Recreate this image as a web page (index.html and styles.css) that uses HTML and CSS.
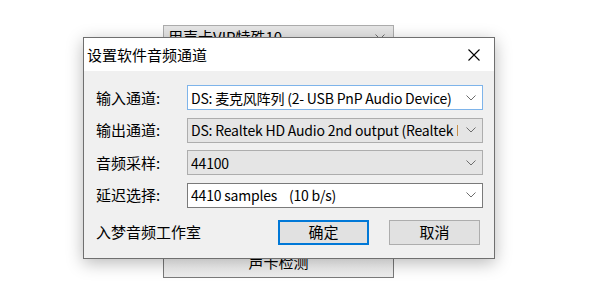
FILE: index.html
```html
<!DOCTYPE html>
<html lang="zh-CN">
  <head>
    <meta charset="UTF-8" />
    <meta name="viewport" content="width=device-width, initial-scale=1.0" />
    <title>设置软件音频通道</title>
    <link rel="stylesheet" href="styles.css">
  </head>
  <body>
    <div class="app">
      <div class="app-title">入梦音频助手</div>
      <div class="app-select">
        <span>用声卡VIP特殊10</span>
        <svg class="arrow" width="10" height="6" viewBox="0 0 10 6"><path d="M0.5 0.5 L5 5 L9.5 0.5" /></svg>
      </div>
      <div class="app-btn">声卡检测</div>
    </div>

    <div class="dialog">
      <div class="titlebar">
        <span>设置软件音频通道</span>
        <svg class="close" width="12" height="12" viewBox="0 0 12 12"><path d="M0.5 0.5 L11.5 11.5 M11.5 0.5 L0.5 11.5" /></svg>
      </div>
      <div class="client">
        <div class="form">
          <label>输入通道:</label>
          <div class="combo combo-focus">
            <span class="combo-text">DS: 麦克风阵列 (2- USB PnP Audio Device)</span>
            <svg class="arrow" width="10" height="6" viewBox="0 0 10 6"><path d="M0.5 0.5 L5 5 L9.5 0.5" /></svg>
          </div>

          <label>输出通道:</label>
          <div class="combo combo-list">
            <span class="combo-text">DS: Realtek HD Audio 2nd output (Realtek High Definition Audio)</span>
            <svg class="arrow" width="10" height="6" viewBox="0 0 10 6"><path d="M0.5 0.5 L5 5 L9.5 0.5" /></svg>
          </div>

          <label>音频采样:</label>
          <div class="combo combo-list">
            <span class="combo-text">44100</span>
            <svg class="arrow" width="10" height="6" viewBox="0 0 10 6"><path d="M0.5 0.5 L5 5 L9.5 0.5" /></svg>
          </div>

          <label>延迟选择:</label>
          <div class="combo combo-edit">
            <span class="combo-text">4410 samples&nbsp;&nbsp;&nbsp;&nbsp;(10 b/s)</span>
            <svg class="arrow" width="10" height="6" viewBox="0 0 10 6"><path d="M0.5 0.5 L5 5 L9.5 0.5" /></svg>
          </div>
        </div>

        <div class="footer">
          <span class="studio">入梦音频工作室</span>
          <div class="buttons">
            <button class="btn btn-default">确定</button>
            <button class="btn">取消</button>
          </div>
        </div>
      </div>
    </div>
  </body>
</html>
```

FILE: styles.css
```css
body {
  font-family: "Noto Sans CJK SC", "Liberation Sans", sans-serif;
  font-size: 15px;
  margin: 0;
  padding: 0;
  width: 600px;
  height: 306px;
  overflow: hidden;
  background-color: white;
  color: #000;
  position: relative;
}
.app {
  width: 231px;
  margin-left: 163px;
}
.app-title {
  height: 20px;
  line-height: 20px;
  margin-top: -18px;
  text-align: center;
}
.app-select {
  box-sizing: border-box;
  height: 24px;
  margin-top: 23px;
  padding: 0 8px 0 4px;
  border: 1px solid #adadad;
  background-color: #e5e5e5;
  display: flex;
  align-items: center;
  justify-content: space-between;
  line-height: 20px;
}
.app-btn {
  box-sizing: border-box;
  height: 32px;
  margin-top: 197px;
  border: 1px solid #7a7a7a;
  background: linear-gradient(#fdfdfd, #ececec);
  display: flex;
  align-items: center;
  justify-content: center;
  padding-bottom: 2px;
}
.arrow path {
  fill: none;
  stroke: #6d6d6d;
  stroke-width: 1;
}

/* dialog on top of the app window */
.dialog {
  position: absolute;
  left: 83px;
  top: 37px;
  width: 412px;
  height: 222px;
  box-sizing: border-box;
  border: 1px solid #6f6f6f;
  background-color: #f0f0f0;
  box-shadow: 0 4px 16px rgba(0, 0, 0, 0.28);
  display: flex;
  flex-direction: column;
}
.titlebar {
  height: 32px;
  background-color: white;
  display: flex;
  align-items: center;
  justify-content: space-between;
  padding: 1px 14px 0 3px;
  line-height: 20px;
}
.close path {
  stroke: #000;
  stroke-width: 1.1;
}
.client {
  padding: 14px 11px 0 12px;
}
.form {
  display: grid;
  grid-template-columns: 91px minmax(0, 1fr);
  row-gap: 7.5px;
  align-items: center;
}
.form label {
  line-height: 20px;
}
.combo {
  box-sizing: border-box;
  min-width: 0;
  height: 25px;
  border: 1px solid #adadad;
  background-color: #e5e5e5;
  display: flex;
  align-items: center;
  padding: 0 6px 0 3px;
  gap: 8px;
}
.combo-focus {
  border-color: #7eb4ea;
  background-color: white;
}
.combo-edit {
  border-color: #7a7a7a;
  background-color: white;
}
.combo-text {
  flex: 1;
  min-width: 0;
  white-space: nowrap;
  overflow: hidden;
  font-size: 14px;
  line-height: 20px;
  letter-spacing: -0.2px;
}
.combo .arrow {
  flex: none;
}
.footer {
  display: flex;
  align-items: center;
  justify-content: space-between;
  margin-top: 12px;
  padding-right: 3px;
}
.studio {
  line-height: 20px;
}
.buttons {
  display: flex;
  gap: 20px;
}
.btn {
  box-sizing: border-box;
  width: 91px;
  height: 25px;
  font-family: inherit;
  font-size: 15px;
  line-height: 20px;
  padding: 0;
  color: #000;
  background-color: #e1e1e1;
  border: 1px solid #adadad;
}
.btn-default {
  border: 2px solid #0078d7;
}
```
